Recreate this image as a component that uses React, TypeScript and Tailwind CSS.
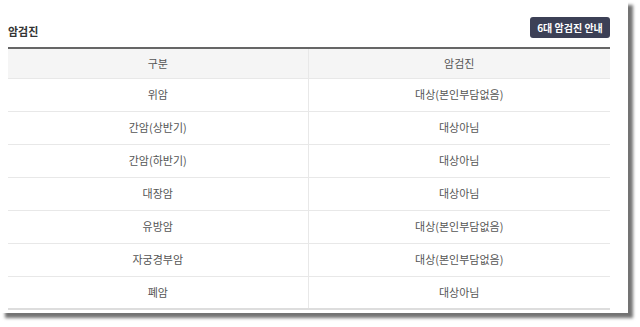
const rows = [
  ["위암", "대상(본인부담없음)"],
  ["간암(상반기)", "대상아님"],
  ["간암(하반기)", "대상아님"],
  ["대장암", "대상아님"],
  ["유방암", "대상(본인부담없음)"],
  ["자궁경부암", "대상(본인부담없음)"],
  ["폐암", "대상아님"],
]

export default function App() {
  return (
    <div
      className="w-[640px] h-[327px] bg-white overflow-hidden"
      style={{ fontFamily: '"Noto Sans CJK KR", "Noto Sans", sans-serif' }}
    >
      <div className="w-[628px] h-[313px] bg-white shadow-[5px_5px_3px_rgba(0,0,0,0.55)] px-2 pt-[17px]">
        <div className="flex items-center justify-between h-[21px] w-[602px]">
          <h3 className="text-[11px] font-bold text-[#333] mt-[7px]">암검진</h3>
          <button className="h-[21px] w-[80px] rounded-[3px] bg-[#3c4056] text-white text-[10px] font-semibold leading-none">
            6대 암검진 안내
          </button>
        </div>

        <table className="w-[602px] mt-[9px] border-t-2 border-[#666] border-b-2 border-b-[#ddd] border-collapse text-[11px] text-[#555]">
          <thead>
            <tr className="h-[30px] bg-[#f5f5f5]">
              <th className="w-[300px] font-normal border-r border-[#e8e8e8]">구분</th>
              <th className="font-normal">암검진</th>
            </tr>
          </thead>
          <tbody>
            {rows.map(([name, status], i) => (
              <tr key={i} className="h-[33px] border-t border-[#e8e8e8]">
                <td className="text-center border-r border-[#e8e8e8]">{name}</td>
                <td className="text-center">{status}</td>
              </tr>
            ))}
          </tbody>
        </table>
      </div>
    </div>
  )
}
